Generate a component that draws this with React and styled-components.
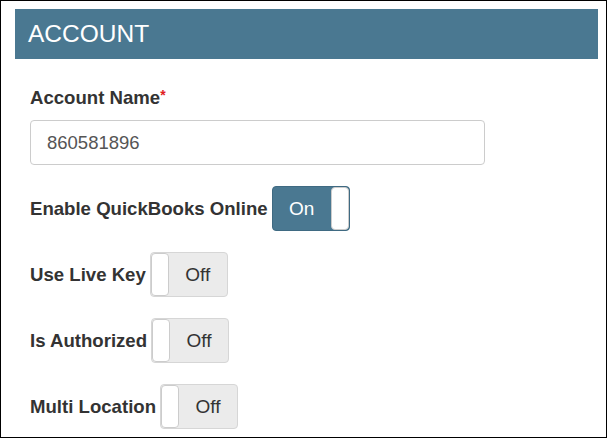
import { createGlobalStyle, styled } from "styled-components";

const Global = createGlobalStyle`
    body { margin: 0; font-family: "Liberation Sans", Arial, sans-serif; background: white; }
`;

const Frame = styled.div`
    width: 607px;
    height: 438px;
    box-sizing: border-box;
    border: 1px solid black;
    padding: 8px 8px 0 14px;
    overflow: hidden;
`;

const Header = styled.div`
    height: 50px;
    background-color: #4a7891;
    color: white;
    font-size: 24.5px;
    display: flex;
    align-items: center;
    padding-left: 13px;
    box-sizing: border-box;
`;

const Body = styled.div`
    padding: 28px 0 0 15px;
    display: flex;
    flex-direction: column;
`;

const Label = styled.div`
    font-weight: bold;
    font-size: 18.6px;
    color: #333;
    white-space: nowrap;
    & > span { color: #e02020; font-size: 14px; vertical-align: top; }
`;

const Input = styled.div`
    margin-top: 11px;
    width: 455px;
    height: 45px;
    box-sizing: border-box;
    border: 1px solid #ccc;
    border-radius: 4px;
    display: flex;
    align-items: center;
    padding-left: 16px;
    font-size: 18.5px;
    color: #555;
`;

const Row = styled.div`
    display: flex;
    align-items: center;
    gap: 4px;
    margin-top: 21px;
`;

const Toggle = styled.div`
    width: 78px;
    height: 45px;
    flex-shrink: 0;
    box-sizing: border-box;
    border-radius: 4px;
    border: 1px solid ${(p) => (p.$on ? "#3f6a82" : "#d6d6d6")};
    background-color: ${(p) => (p.$on ? "#4a7891" : "#ebebeb")};
    color: ${(p) => (p.$on ? "white" : "#333")};
    display: flex;
    flex-direction: ${(p) => (p.$on ? "row" : "row-reverse")};
    font-size: 19px;
    overflow: hidden;
`;

const ToggleText = styled.div`
    flex: 1;
    display: flex;
    align-items: center;
    justify-content: center;
`;

const Knob = styled.div`
    width: 16px;
    background: white;
    border-radius: 4px;
    border: 1px solid #ccc;
`;

const rows = [
    { label: "Enable QuickBooks Online", on: true },
    { label: "Use Live Key", on: false },
    { label: "Is Authorized", on: false },
    { label: "Multi Location", on: false },
];

const App = () => {
    return (
        <Frame>
            <Global />
            <Header>ACCOUNT</Header>
            <Body>
                <Label>Account Name<span>*</span></Label>
                <Input>860581896</Input>
                {rows.map((r) => (
                    <Row key={r.label}>
                        <Label>{r.label}</Label>
                        <Toggle $on={r.on}>
                            <ToggleText>{r.on ? "On" : "Off"}</ToggleText>
                            <Knob />
                        </Toggle>
                    </Row>
                ))}
            </Body>
        </Frame>
    );
};

export default App;
